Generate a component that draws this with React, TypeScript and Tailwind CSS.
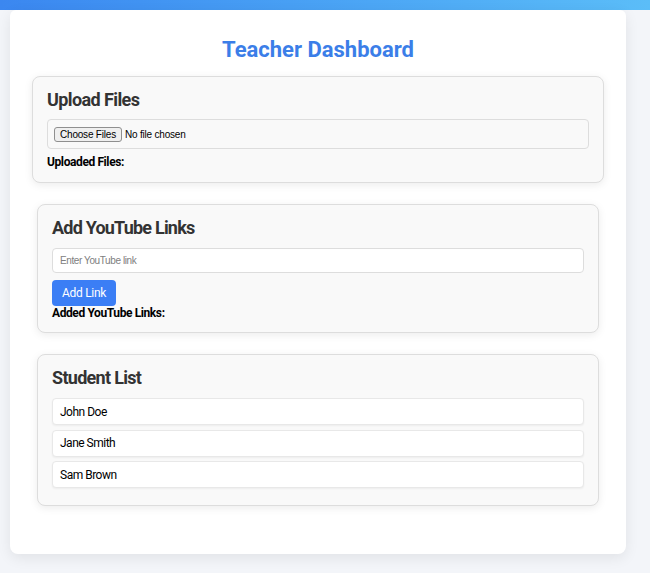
const students = ['John Doe', 'Jane Smith', 'Sam Brown'];

function Card({ wide, last, children }: { wide?: boolean; last?: boolean; children: React.ReactNode }) {
  return (
    <div
      className={
        'rounded-lg border border-[#dddddd] bg-[#f9f9f9] px-[14px] pt-[11px] shadow-[0_2px_8px_rgba(0,0,0,0.08)] ' +
        (wide ? 'mx-[22px] ' : 'mx-[27px] ') +
        (last ? 'pb-[17px]' : 'pb-[12px]')
      }
    >
      {children}
    </div>
  );
}

export default function App() {
  return (
    <div className="min-h-[573px] bg-[#f3f5f9] font-['Roboto',sans-serif]">
      <div className="h-[10px] bg-gradient-to-r from-[#3b87f0] to-[#5bbdf8]" />
      <div className="ml-[10px] w-[616px] rounded-b-lg rounded-t-md bg-white pt-[26px] pb-[48px] shadow-[0_4px_14px_rgba(0,0,0,0.08)]">
        <h1 className="mb-[12px] text-center text-[22px] font-bold leading-[28px] text-[#3b7ee8]">
          Teacher Dashboard
        </h1>

        <Card wide>
          <h2 className="text-[18px] font-bold leading-[24px] tracking-[-0.6px] text-[#333333]">Upload Files</h2>
          <div className="mt-[7px] flex h-[30px] items-center rounded border border-[#dddddd] bg-[#f9f9f9] px-[6px] font-['Liberation_Sans',sans-serif] text-[10px] tracking-[-0.2px] text-black">
            <span className="rounded-[3px] border border-[#8f8f8f] bg-[#efefef] px-[5px] leading-[13px]">
              Choose Files
            </span>
            <span className="ml-[3px]">No file chosen</span>
          </div>
          <p className="mt-[5px] text-[12px] font-bold leading-[16px] tracking-[-0.4px] text-black">Uploaded Files:</p>
        </Card>

        <div className="h-[21px]" />

        <Card>
          <h2 className="text-[18px] font-bold leading-[24px] tracking-[-0.8px] text-[#333333]">Add YouTube Links</h2>
          <input
            placeholder="Enter YouTube link"
            className="mt-[8px] block h-[25px] w-full rounded border border-[#dddddd] bg-white px-[7px] font-['Liberation_Sans',sans-serif] text-[10px] tracking-[-0.4px] placeholder:text-[#808080] outline-none"
          />
          <button className="mt-[7px] block h-[26px] rounded bg-[#3b7ef5] px-[10px] text-[12px] leading-[26px] tracking-[-0.3px] text-white">
            Add Link
          </button>
          <p className="text-[12px] font-bold leading-[14px] tracking-[-0.4px] text-black">Added YouTube Links:</p>
        </Card>

        <div className="h-[21px]" />

        <Card last>
          <h2 className="text-[18px] font-bold leading-[24px] tracking-[-0.7px] text-[#333333]">Student List</h2>
          <div className="mt-[8px] flex flex-col gap-[4.5px]">
            {students.map((s) => (
              <div
                key={s}
                className="flex h-[27px] items-center rounded border border-[#e8e8e8] bg-white px-[7px] text-[12px] tracking-[-0.5px] text-black shadow-[0_1px_2px_rgba(0,0,0,0.05)]"
              >
                {s}
              </div>
            ))}
          </div>
        </Card>
      </div>
    </div>
  );
}
